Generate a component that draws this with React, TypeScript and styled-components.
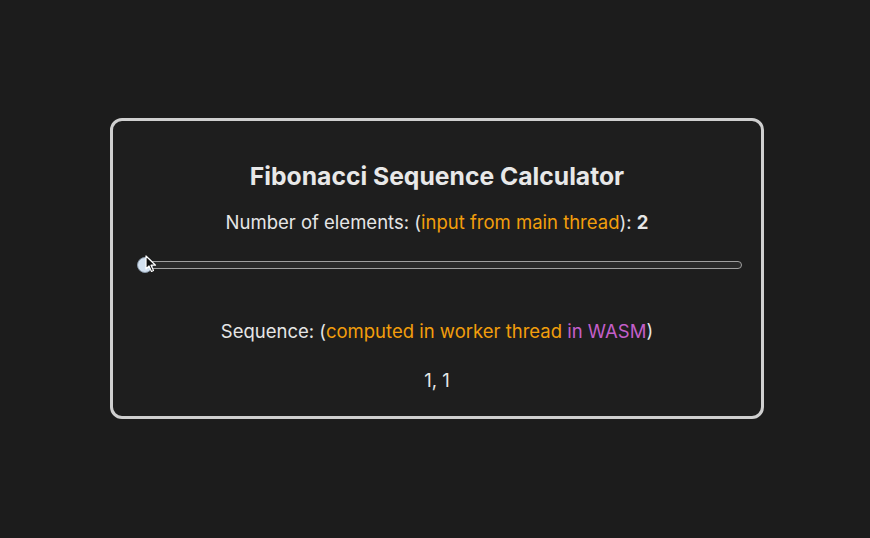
import styled, { createGlobalStyle } from 'styled-components';

const Global = createGlobalStyle`
  html, body {
    margin: 0;
    padding: 0;
    background: #1c1c1c;
  }
  body {
    font-family: Inter, "Noto Sans", sans-serif;
    color: #e6e6e6;
  }
`;

const Page = styled.div`
  width: 870px;
  height: 538px;
  display: flex;
  align-items: flex-start;
  justify-content: center;
  padding: 118px 0 0 4px;
  box-sizing: border-box;
`;

const Card = styled.div`
  width: 654px;
  height: 301px;
  box-sizing: border-box;
  border: 3px solid #cfcfcf;
  border-radius: 12px;
  background: #1e1e1e;
  padding: 37px 23px 0;
  display: flex;
  flex-direction: column;
  align-items: center;
`;

const Title = styled.h1`
  margin: 0;
  font-size: 24.7px;
  font-weight: 700;
  color: #e8e8e8;
  line-height: 36px;
`;

const Label = styled.div`
  margin-top: 14px;
  font-size: 18.5px;
  line-height: 28px;
  color: #e6e6e6;
`;

const Accent = styled.span<{ $tone: 'orange' | 'purple' }>`
  color: ${(p) => (p.$tone === 'orange' ? '#f29e0c' : '#c35fc9')};
`;

const Strong = styled.b`
  font-weight: 700;
`;

const SliderWrap = styled.div`
  position: relative;
  width: 602px;
  height: 16px;
  margin: 21px 0 0 8px;
  display: flex;
  align-items: center;
`;

const Track = styled.div`
  width: 100%;
  height: 8px;
  box-sizing: border-box;
  border: 1.5px solid #a0a0a0;
  border-radius: 4px;
  background: #2a2a2a;
`;

const Thumb = styled.div`
  position: absolute;
  left: -3px;
  top: 0;
  width: 16px;
  height: 16px;
  box-sizing: border-box;
  border-radius: 50%;
  background: #d3e1f0;
  border: 1px solid #8a9aaa;
`;

const Cursor = styled.svg`
  position: absolute;
  left: 5px;
  top: -2px;
`;

const Sequence = styled.div`
  margin-top: 44px;
  font-size: 18.5px;
  line-height: 28px;
`;

const Values = styled.div`
  margin-top: 21px;
  font-size: 18.5px;
  line-height: 28px;
`;

export default function App() {
  return (
    <>
      <Global />
      <Page>
        <Card>
          <Title>Fibonacci Sequence Calculator</Title>
          <Label>
            Number of elements: (<Accent $tone="orange">input from main thread</Accent>): <Strong>2</Strong>
          </Label>
          <SliderWrap>
            <Track />
            <Thumb />
            <Cursor width="12" height="18" viewBox="0 0 12 18">
              <path d="M1 1 L1 14 L4 11 L6.5 16.5 L8.5 15.5 L6 10.2 L10.5 10.2 Z" fill="#111" stroke="#fff" strokeWidth="1.2" strokeLinejoin="round" />
            </Cursor>
          </SliderWrap>
          <Sequence>
            Sequence: (<Accent $tone="orange">computed in worker thread</Accent> <Accent $tone="purple">in WASM</Accent>)
          </Sequence>
          <Values>1, 1</Values>
        </Card>
      </Page>
    </>
  );
}
